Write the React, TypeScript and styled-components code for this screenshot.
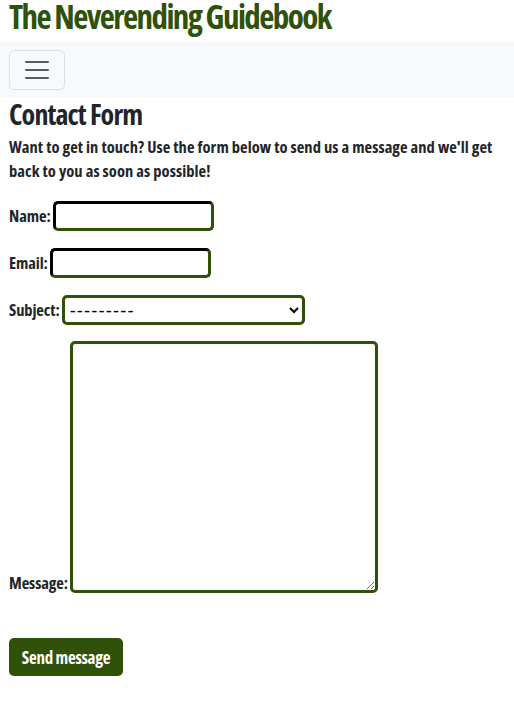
import React from "react";
import styled, { createGlobalStyle } from "styled-components";

const GREEN = "#2f5109";
const FONT = `"Open Sans", "DejaVu Sans Condensed", sans-serif`;

const Global = createGlobalStyle`
  html, body { margin: 0; padding: 0; background: #fff; }
  body {
    font-family: ${FONT};
    font-stretch: 75%;
    color: #212529;
  }
  * { box-sizing: border-box; }
`;

const Title = styled.h1`
  margin: 0;
  height: 42px;
  padding: 0 9px;
  font-family: ${FONT};
  font-stretch: 75%;
  font-weight: 700;
  font-size: 33px;
  letter-spacing: -1.6px;
  line-height: 33px;
  color: ${GREEN};
`;

const NavBar = styled.nav`
  background: #f8f9fa;
  height: 55px;
  padding: 8px 9px;
  display: flex;
  align-items: flex-start;
`;

const Toggler = styled.button`
  width: 56px;
  height: 40px;
  padding: 0;
  background: transparent;
  border: 1px solid rgba(0, 0, 0, 0.1);
  border-radius: 5px;
  display: flex;
  align-items: center;
  justify-content: center;
`;

const Main = styled.main`
  padding: 0 9px;
`;

const Heading = styled.h2`
  margin: 0;
  padding-top: 1px;
  font-family: ${FONT};
  font-stretch: 75%;
  font-weight: 700;
  font-size: 28px;
  letter-spacing: -0.9px;
  line-height: 32px;
  color: #212529;
`;

const Intro = styled.p`
  margin: 5px 0 18px;
  font-size: 16.5px;
  font-weight: 700;
  line-height: 24px;
  letter-spacing: 0.05px;
`;

const Row = styled.div<{ $mb?: number }>`
  display: flex;
  align-items: flex-end;
  gap: 2px;
  margin-bottom: ${(p) => p.$mb ?? 17}px;
`;

const Label = styled.label<{ $pb?: number }>`
  font-size: 16.5px;
  font-weight: 700;
  line-height: 20px;
  letter-spacing: -0.1px;
  padding-bottom: ${(p) => p.$pb ?? 5}px;
`;

const TextInput = styled.input`
  width: 161px;
  height: 30px;
  border: 3px inset ${GREEN};
  border-radius: 5px;
  padding: 0 4px;
  font-size: 16px;
  background: #fff;
`;

const Select = styled.select`
  width: 243px;
  height: 30px;
  border: 3px solid ${GREEN};
  border-radius: 5px;
  padding: 0 1px;
  font-family: "DejaVu Sans", sans-serif;
  font-size: 17px;
  font-weight: 400;
  letter-spacing: 1.1px;
  color: #000;
  background: #fff;
`;

const TextArea = styled.textarea`
  width: 308px;
  height: 252px;
  border: 3px solid ${GREEN};
  border-radius: 5px;
  display: block;
  resize: both;
  background: #fff;
`;

const SendButton = styled.button`
  margin-top: 45px;
  width: 114px;
  height: 38px;
  padding: 0;
  border: none;
  border-radius: 5px;
  background: ${GREEN};
  color: #fff;
  font-family: ${FONT};
  font-stretch: 75%;
  font-weight: 700;
  font-size: 17px;
  letter-spacing: -0.3px;
  white-space: nowrap;
`;

export default function App() {
  return (
    <>
      <Global />
      <Title>The Neverending Guidebook</Title>
      <NavBar>
        <Toggler aria-label="Toggle navigation">
          <svg width="30" height="30" viewBox="0 0 30 30">
            <path
              d="M4 7h22M4 15h22M4 23h22"
              stroke="rgba(33,37,41,0.75)"
              strokeWidth="2"
              strokeLinecap="round"
            />
          </svg>
        </Toggler>
      </NavBar>
      <Main>
        <Heading>Contact Form</Heading>
        <Intro>
          Want to get in touch? Use the form below to send us a message and we'll get back to you as soon as possible!
        </Intro>
        <form onSubmit={(e) => e.preventDefault()}>
          <Row>
            <Label htmlFor="name">Name:</Label>
            <TextInput id="name" type="text" />
          </Row>
          <Row>
            <Label htmlFor="email">Email:</Label>
            <TextInput id="email" type="email" />
          </Row>
          <Row $mb={16}>
            <Label htmlFor="subject">Subject:</Label>
            <Select id="subject">
              <option>---------</option>
            </Select>
          </Row>
          <Row $mb={0}>
            <Label htmlFor="message" $pb={0}>Message:</Label>
            <TextArea id="message" />
          </Row>
          <SendButton type="submit">Send message</SendButton>
        </form>
      </Main>
    </>
  );
}
